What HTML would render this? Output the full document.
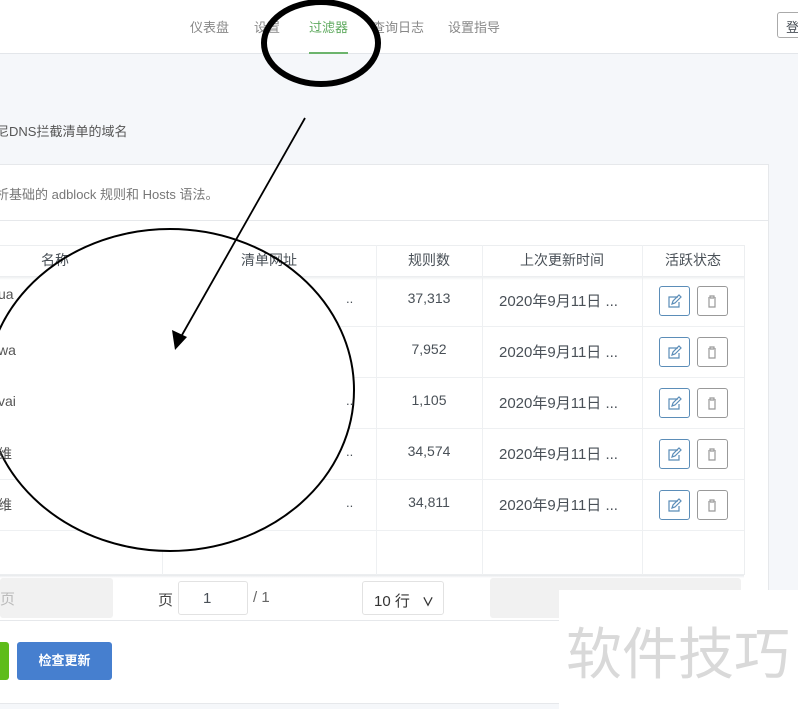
<!DOCTYPE html>
<html><head><meta charset="utf-8"><style>
*{margin:0;padding:0;box-sizing:border-box}
body{width:798px;height:709px;overflow:hidden;background:#f5f7fa;font-family:"Liberation Sans","Noto Sans CJK SC",sans-serif;position:relative;color:#495057}
.a{position:absolute}
.nav{left:0;top:0;width:798px;height:54px;background:#fff;border-bottom:1px solid #e3e6ea}
.nv{top:17px;font-size:13px;color:#888}
.card{left:-2px;top:164px;width:771px;height:540px;background:#fff;border:1px solid #e6e8eb;border-left:none}
.th{top:245px;height:31px;font-size:14px;color:#495057;text-align:center;line-height:31px}
.vl{width:1px;background:#eef0f2}
.hl{height:1px;background:#eef0f2;left:0;width:744px}
.num{font-size:14px;color:#495057;width:106px;text-align:center;left:376px}
.dt{font-size:15px;color:#495057;left:499px}
.btn{width:31px;height:30px;border:1px solid #5b8db8;border-radius:3px;background:#fff}
.btn2{border-color:#999}
.nm{left:-2px;font-size:14px;color:#555}
</style></head><body>
<div class="a nav"></div>
<div class="a nv" style="left:190px">仪表盘</div>
<div class="a nv" style="left:254px">设置</div>
<div class="a nv" style="left:309px;color:#5faa5f">过滤器</div>
<div class="a" style="left:309px;top:52px;width:39px;height:2px;background:#6cb46c"></div>
<div class="a nv" style="left:372px">查询日志</div>
<div class="a nv" style="left:448px">设置指导</div>
<div class="a" style="left:777px;top:12px;width:30px;height:26px;border:1px solid #aaa;border-radius:3px;font-size:13px;padding:4px 0 0 8px;background:#fff">登</div>
<div class="a" style="left:-4px;top:121px;font-size:13px;color:#555">尼DNS拦截清单的域名</div>
<div class="a card"></div>
<div class="a" style="left:0;top:220px;width:769px;height:1px;background:#e6e8eb"></div>
<div class="a" style="left:-4px;top:184px;font-size:13px;color:#777">析基础的 adblock 规则和 Hosts 语法。</div>
<div class="a" style="left:0;top:245px;width:745px;height:330px;border:1px solid #eceef0;border-left:none;background:#fff"></div>
<div class="a" style="left:0;top:276px;width:744px;height:4px;background:linear-gradient(#e9ebee,#fff)"></div>
<div class="a vl" style="left:162px;top:245px;height:330px"></div>
<div class="a vl" style="left:376px;top:245px;height:330px"></div>
<div class="a vl" style="left:482px;top:245px;height:330px"></div>
<div class="a vl" style="left:642px;top:245px;height:330px"></div>
<div class="a hl" style="top:326px"></div><div class="a hl" style="top:377px"></div><div class="a hl" style="top:428px"></div><div class="a hl" style="top:479px"></div><div class="a hl" style="top:530px"></div>
<div class="a num" style="top:290px">37,313</div><div class="a num" style="top:341px">7,952</div><div class="a num" style="top:392px">1,105</div><div class="a num" style="top:443px">34,574</div><div class="a num" style="top:494px">34,811</div>
<div class="a dt" style="top:290px">2020年9月11日 ...</div><div class="a dt" style="top:341px">2020年9月11日 ...</div><div class="a dt" style="top:392px">2020年9月11日 ...</div><div class="a dt" style="top:443px">2020年9月11日 ...</div><div class="a dt" style="top:494px">2020年9月11日 ...</div>
<svg class="a" style="left:0;top:0" width="798" height="709">
<ellipse cx="170" cy="390" rx="184" ry="161" fill="#fff" stroke="none"/>
</svg>
<div class="a th" style="left:0;width:110px">名称</div>
<div class="a th" style="left:162px;width:214px">清单网址</div>
<div class="a th" style="left:376px;width:106px">规则数</div>
<div class="a th" style="left:482px;width:160px">上次更新时间</div>
<div class="a th" style="left:642px;width:102px">活跃状态</div>
<svg class="a" style="left:0;top:0" width="798" height="709">
<ellipse cx="170" cy="390" rx="184" ry="161" fill="none" stroke="#000" stroke-width="2"/>
<ellipse cx="321" cy="43" rx="57" ry="41" fill="none" stroke="#000" stroke-width="6"/>
<line x1="305" y1="118" x2="182" y2="335" stroke="#000" stroke-width="1.8"/>
<polygon points="175,350 172,330 187,337" fill="#000"/>
</svg>
<div class="a nm" style="top:286px">ua</div>
<div class="a nm" style="top:342px">wa</div>
<div class="a nm" style="top:393px">vai</div>
<div class="a nm" style="top:444px">维</div>
<div class="a nm" style="top:495px">维</div>
<div class="a" style="left:346px;top:291px;font-size:13px">..</div>
<div class="a" style="left:346px;top:444px;font-size:13px">..</div>
<div class="a" style="left:346px;top:495px;font-size:13px">..</div>
<div class="a" style="left:346px;top:393px;font-size:13px">..</div>
<div class="a btn" style="left:659px;top:286px"></div><div class="a btn btn2" style="left:697px;top:286px"></div>
<div class="a btn" style="left:659px;top:337px"></div><div class="a btn btn2" style="left:697px;top:337px"></div>
<div class="a btn" style="left:659px;top:388px"></div><div class="a btn btn2" style="left:697px;top:388px"></div>
<div class="a btn" style="left:659px;top:439px"></div><div class="a btn btn2" style="left:697px;top:439px"></div>
<div class="a btn" style="left:659px;top:490px"></div><div class="a btn btn2" style="left:697px;top:490px"></div>
<svg class="a" style="left:0;top:0" width="798" height="709" fill="none" stroke-width="1.2">
<g id="ic">
<g stroke="#5b8db8"><path d="M678 297h-9v10h10v-5"/><path d="M672 304l1-3 6-6 2 2-6 6z"/></g>
<g stroke="#999"><path d="M708 298h8M710 298v-2h4v2M709 299v8h6v-8"/></g>
</g>
<use href="#ic" y="51"/><use href="#ic" y="102"/><use href="#ic" y="153"/><use href="#ic" y="204"/>
</svg>
<div class="a" style="left:0;top:575px;width:744px;height:3px;background:linear-gradient(#e6e8eb,#fff)"></div>
<div class="a" style="left:0;top:578px;width:113px;height:40px;background:#f1f1f1;border-radius:3px;font-size:15px;color:#bbb;padding:10px 0 0 0">页</div>
<div class="a" style="left:158px;top:589px;font-size:15px;color:#444">页</div>
<div class="a" style="left:178px;top:581px;width:70px;height:34px;border:1px solid #e2e2e2;border-radius:3px;font-size:15px;padding:8px 0 0 24px">1</div>
<div class="a" style="left:253px;top:589px;font-size:15px;color:#666">/ 1</div>
<div class="a" style="left:362px;top:581px;width:82px;height:34px;border:1px solid #e2e2e2;border-radius:3px;font-size:15px;padding:8px 0 0 11px;color:#333">10 行 <span style="font-size:12px;margin-left:8px;font-weight:bold">∨</span></div>
<div class="a" style="left:490px;top:578px;width:251px;height:40px;background:#f1f1f1;border-radius:3px"></div>
<div class="a" style="left:0;top:620px;width:769px;height:1px;background:#e6e8eb"></div>
<div class="a" style="left:-4px;top:642px;width:13px;height:38px;background:#5ebc1a;border-radius:3px"></div>
<div class="a" style="left:17px;top:642px;width:95px;height:38px;background:#467fcf;border-radius:3px;color:#fff;font-size:13px;font-weight:bold;text-align:center;line-height:38px">检查更新</div>
<div class="a" style="left:559px;top:590px;width:239px;height:119px;background:#fff"></div>
<div class="a" style="left:566px;top:610px;font-size:56px;color:#d9d9d9;font-family:'Noto Sans CJK SC',sans-serif">软件技巧</div>
</body></html>
